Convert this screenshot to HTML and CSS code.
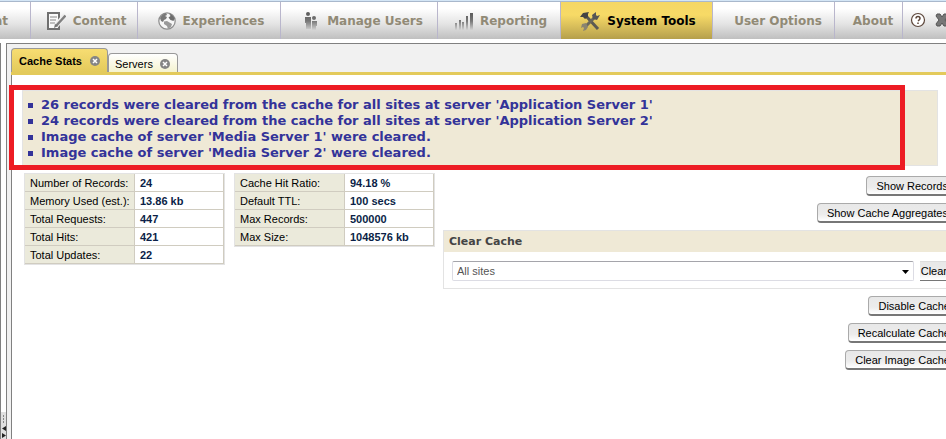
FILE: index.html
```
<!DOCTYPE html>
<html lang="en">
<head>
<meta charset="utf-8">
<title>System Tools - Cache Stats</title>
<link rel="stylesheet" href="styles.css">
</head>
<body>
<nav class="nav">
  <a class="nav-item nav-cut" href="#">Management</a>
  <a class="nav-item" href="#">
    <svg width="20" height="20" viewBox="0 0 20 20" fill="none"><path d="M2 2h11v16H2z" fill="#fafafa" stroke="#707070" stroke-width="2"/><path d="M4 6h7M4 9h6M4 12h5" stroke="#888"/><path d="M19 4l-9 11" stroke="#eee" stroke-width="5"/><path d="M19.500 4.500L10 15" stroke="#808080" stroke-width="2.500"/><path d="M8 17l1-4 3 2z" fill="#777"/></svg>
    Content</a>
  <a class="nav-item" href="#">
    <svg width="18" height="18" viewBox="0 0 18 18"><circle cx="9" cy="9" r="8.200" fill="#f6f6f6" stroke="#8c8c8c" stroke-width="1.200"/><path d="M2 6q2-4 6-5l1 2-2 1 2 1-1 2-2 1-1 2-2-1z" fill="#777"/><path d="M11 1.500q4 1 5.500 5l-1 2.500-3-1-2-2.500 2-1.500z" fill="#6c6c6c"/><path d="M6 9.500l3-.5 5 3-1 3-3 2-1-3-3-2z" fill="#999"/></svg>
    Experiences</a>
  <a class="nav-item nav-people" href="#">
    <svg width="14" height="20" viewBox="0 0 14 20"><defs><linearGradient id="fade" x1="0" y1="0" x2="0" y2="20" gradientUnits="userSpaceOnUse"><stop offset="0" stop-color="#555"/><stop offset=".5" stop-color="#777"/><stop offset="1" stop-color="#ddd"/></linearGradient></defs><g fill="url(#fade)"><circle cx="4" cy="3" r="2"/><path d="M1 6h6v12H2v-6H1z"/><circle cx="10" cy="7" r="2"/><path d="M8 10h5v5h-1v4H8z"/></g></svg>
    Manage Users</a>
  <a class="nav-item" href="#">
    <svg width="18" height="20" viewBox="0 0 18 20"><g fill="url(#fade)"><path d="M0 12h2v7H0zM4 9h2v10H4zM7 11h2v8H7zM11 5h2v14h-2zM15 2h3v17h-3z"/></g></svg>
    Reporting</a>
  <a class="nav-item nav-active" href="#">
    <svg width="20" height="20" viewBox="0 0 20 20" fill="none"><path d="M6 5l12 13" stroke="#5c5a52" stroke-width="3"/><path d="M0 6l3-4 6-1-1 2v3L5 8 3 6z" fill="#444"/><path d="M15 6L5 16" stroke="#6a675a" stroke-width="3"/><path d="M16 1l-4 3 1 4 4 1 3-5-3 1-1-1z" fill="#555"/><path d="M2 13l4-1 2 4-2 3-3 1 1-3-1-1-2 1z" fill="#8a8470"/></svg>
    System Tools</a>
  <a class="nav-item nav-text" href="#">User Options</a>
  <a class="nav-item nav-text" href="#">About</a>
  <div class="nav-actions">
    <button type="button" class="icon-button" aria-label="Help"><svg width="16" height="16" viewBox="0 0 16 16" fill="none"><circle cx="8" cy="8" r="6.5" fill="#fff" stroke="#5c463a" stroke-width="1.2"/><path d="M6 6.5q0-2 2-2t2 2q0 1-2 2.500M8 10.500v1.500" stroke="#5c463a" stroke-width="1.5"/></svg></button>
    <button type="button" class="icon-button" aria-label="Close"><svg width="14" height="14" viewBox="0 0 14 14"><path d="M2 1h3l2 3 2-3h3l1 2-3 4 3 4-1 2H9l-2-3-2 3H2l-1-2 3-4-3-4z" fill="#777" stroke="#555"/></svg></button>
  </div>
</nav>
<div class="workspace">
  <aside class="rail">
    <div class="splitter">
      <svg width="5" height="27" viewBox="0 0 5 27"><path d="M2.500 3v2M2.500 6v2M2.500 9v2" stroke="#888"/><path d="M5 14v5L1 16.500zM1 21v5l4-2.500z" fill="#222"/></svg>
    </div>
  </aside>
  <main class="panel">
    <div class="tabs">
      <button type="button" class="tab tab-active">Cache Stats
        <svg width="10" height="10" viewBox="0 0 10 10"><circle cx="5" cy="5" r="5" fill="#858585"/><path d="M3 3l4 4M7 3L3 7" stroke="#fff" stroke-width="1.5"/></svg></button>
      <button type="button" class="tab">Servers
        <svg width="10" height="10" viewBox="0 0 10 10"><circle cx="5" cy="5" r="5" fill="#858585"/><path d="M3 3l4 4M7 3L3 7" stroke="#fff" stroke-width="1.5"/></svg></button>
    </div>
    <div class="content">
      <section class="notice">
        <ul class="messages">
          <li>26 records were cleared from the cache for all sites at server 'Application Server 1'</li>
          <li>24 records were cleared from the cache for all sites at server 'Application Server 2'</li>
          <li>Image cache of server 'Media Server 1' were cleared.</li>
          <li>Image cache of server 'Media Server 2' were cleared.</li>
        </ul>
        <div class="highlight"></div>
      </section>
      <div class="columns">
        <table class="stats">
          <tr><th scope="row">Number of Records:</th><td>24</td></tr>
          <tr><th scope="row">Memory Used (est.):</th><td>13.86 kb</td></tr>
          <tr><th scope="row">Total Requests:</th><td>447</td></tr>
          <tr><th scope="row">Total Hits:</th><td>421</td></tr>
          <tr><th scope="row">Total Updates:</th><td>22</td></tr>
        </table>
        <table class="stats">
          <tr><th scope="row">Cache Hit Ratio:</th><td>94.18 %</td></tr>
          <tr><th scope="row">Default TTL:</th><td>100 secs</td></tr>
          <tr><th scope="row">Max Records:</th><td>500000</td></tr>
          <tr><th scope="row">Max Size:</th><td>1048576 kb</td></tr>
        </table>
        <div class="actions">
          <div class="button-stack">
            <button type="button" class="button">Show Records</button>
            <button type="button" class="button">Show Cache Aggregates</button>
          </div>
          <section class="clear-box">
            <h2 class="clear-title">Clear Cache</h2>
            <div class="clear-row">
              <div class="select-wrap">
                <select class="select" aria-label="Site"><option>All sites</option></select>
                <svg class="caret" width="7" height="4" viewBox="0 0 7 4"><path d="M0 0h7L3.500 4z" fill="#000"/></svg>
              </div>
              <button type="button" class="button button-flat">Clear</button>
            </div>
          </section>
          <div class="button-stack button-stack-wide">
            <button type="button" class="button">Disable Cache</button>
            <button type="button" class="button">Recalculate Cache</button>
            <button type="button" class="button">Clear Image Cache</button>
          </div>
        </div>
      </div>
    </div>
  </main>
</div>
</body>
</html>
```
FILE: styles.css
```
* {
  box-sizing: border-box;
}

body {
  margin: 0;
  height: 100vh;
  display: flex;
  flex-direction: column;
  overflow: hidden;
  background: #fff;
  color: #000;
  font: 11px/14px "Liberation Sans", Arial, sans-serif;
}

button {
  margin: 0;
  color: inherit;
  font: inherit;
  white-space: nowrap;
}

svg {
  flex: none;
}

/* Top navigation */
.nav {
  flex: none;
  display: grid;
  grid-template-columns: 31px 107px 143px 157px 123px 152px 122px 68px 1fr;
  height: 39px;
  border-top: 1px solid #d4e6f6;
  box-shadow: inset 0 1px #a9b8cc;
  background: linear-gradient(#fff 20%, #e4e4e4 60%, #bfbfbf);
}

.nav-item {
  display: flex;
  align-items: center;
  justify-content: center;
  gap: 7px;
  margin-top: 1px;
  padding-left: 4px;
  border-right: 1px solid #b9b6cc;
  overflow: hidden;
  color: #918a76;
  font: bold 12px/16px "DejaVu Sans", Verdana, sans-serif;
  text-decoration: none;
  white-space: nowrap;
}

.nav-cut {
  justify-content: flex-end;
  padding-right: 22px;
}

.nav-people {
  gap: 9px;
  padding-left: 9px;
}

.nav-text {
  padding-left: 9px;
}

.nav-active {
  padding-left: 3px;
  background: linear-gradient(#f5d765, #f7da66 35%, #d9bf5b 65%, #b59f4b);
  color: #000;
}

.nav-actions {
  display: flex;
  align-items: center;
  gap: 9px;
  padding-left: 7px;
}

.icon-button {
  display: flex;
  padding: 0;
  border: 0;
  background: none;
}

/* Workspace */
.workspace {
  flex: 1;
  display: flex;
  min-height: 0;
  margin-top: 4px;
}

.rail {
  flex: none;
  display: flex;
  align-items: flex-end;
  width: 6px;
  border-left: 1px solid #808080;
}

.splitter {
  display: flex;
  background: #e0e0e0;
}

.panel {
  flex: 1;
  display: flex;
  flex-direction: column;
  min-width: 0;
  padding-left: 4px;
  border-top: 1px solid #808080;
  border-left: 1px solid #808080;
  background: #f1f1f1;
}

.tabs {
  flex: none;
  display: flex;
  align-items: flex-end;
  height: 31px;
  border-bottom: 3px solid #e3ca5b;
}

.tab {
  display: flex;
  align-items: center;
  gap: 7px;
  height: 19px;
  padding: 2px 7px 0 6px;
  border: 1px solid #999;
  border-bottom: 0;
  border-radius: 4px 4px 0 0;
  background: linear-gradient(#fff, #f5f3cf);
}

.tab-active {
  gap: 8px;
  height: 24px;
  padding: 1px 7px 0;
  background: linear-gradient(#f7dd72, #e3ca5b);
  font-weight: bold;
}

.content {
  flex: 1;
  padding: 15px 8px 0 10px;
  border-left: 1px solid #808080;
  background: #fff;
}

/* Notice */
.notice {
  position: relative;
  padding: 6px 5px 4px;
  border: 1px solid #e3e3e3;
  background: #efe9d6;
}

.messages {
  margin: 0;
  padding: 0;
  list-style: none;
  color: #333399;
  font: bold 13px/16px "DejaVu Sans", Verdana, sans-serif;
}

.messages li {
  display: flex;
  align-items: center;
  gap: 8px;
}

.messages li::before {
  content: "";
  width: 5px;
  height: 5px;
  background: #333399;
}

.highlight {
  position: absolute;
  inset: -6px 32px -5px -14px;
  border: 5px solid #ed1c24;
}

/* Statistics */
.columns {
  display: flex;
  align-items: flex-start;
  gap: 9px;
  margin: 7px -20px 0 2px;
}

.stats {
  flex: none;
  width: 201px;
  border: 1px solid #e3e3e3;
  border-spacing: 0;
}

.stats th,
.stats td {
  height: 18px;
  padding: 1px 4px;
  border-right: 1px solid #d0ccc0;
  border-bottom: 1px solid #d0ccc0;
  text-align: left;
}

.stats th {
  width: 110px;
  padding-left: 5px;
  padding-right: 0;
  background: #ebeadb;
  font-weight: normal;
  white-space: nowrap;
}

.stats td {
  padding-left: 5px;
  color: #0b1f47;
  font-weight: bold;
}

/* Cache actions */
.actions {
  flex: 1;
  display: flex;
  flex-direction: column;
  gap: 7px;
  min-width: 0;
  margin-left: -1px;
  padding-top: 3px;
}

.button-stack {
  display: flex;
  flex-direction: column;
  align-items: flex-end;
  gap: 7px;
}

.button-stack-wide {
  margin-right: -2px;
}

.button {
  height: 20px;
  padding: 1px 9px 0;
  border: 1px solid #aaa;
  border-bottom: 2px solid #777;
  border-radius: 4px;
  background: linear-gradient(#e8e8e8, #ececec 60%, #fff);
}

.button-flat {
  padding: 0 5px 0 1px;
  border-width: 1px 0 1px 0;
  border-top-color: #ddd;
  border-radius: 0;
}

.clear-box {
  margin-right: -5px;
  border: 1px solid #e3e3e3;
}

.clear-title {
  margin: 0;
  padding: 3px 5px;
  background: #efe9d6;
  color: #444;
  font: bold 11px/15px "DejaVu Sans", Verdana, sans-serif;
}

.clear-row {
  display: flex;
  gap: 6px;
  padding: 9px 10px 7px 8px;
}

.select-wrap {
  position: relative;
  flex: 1;
  display: flex;
}

.select {
  appearance: none;
  width: 100%;
  height: 20px;
  padding: 0 4px;
  border: 1px solid #dcdce4;
  border-top-color: #a5a5ab;
  border-radius: 2px;
  background: #fff;
  color: #555;
  font: inherit;
}

.caret {
  position: absolute;
  top: 9px;
  right: 5px;
  pointer-events: none;
}
```
